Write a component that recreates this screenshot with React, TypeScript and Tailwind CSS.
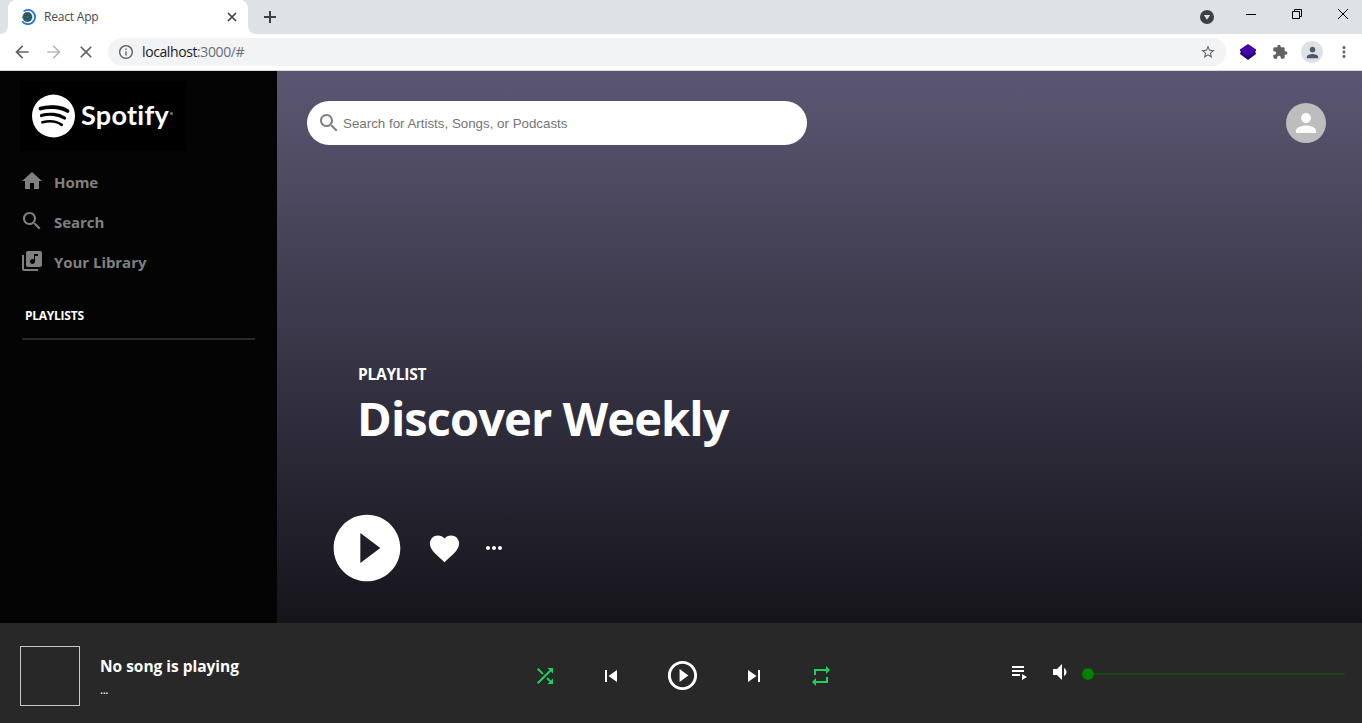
import React from 'react';

const SEGOE = "font-['Open_Sans','Noto_Sans',sans-serif]";

const PATHS = {
  home: 'M10 20v-6h4v6h5v-8h3L12 3 2 12h3v8z',
  search:
    'M15.5 14h-.79l-.28-.27C15.41 12.59 16 11.11 16 9.5 16 5.91 13.09 3 9.5 3S3 5.91 3 9.5 5.91 16 9.5 16c1.61 0 3.09-.59 4.23-1.57l.27.28v.79l5 4.99L20.49 19l-4.99-5zm-6 0C7.01 14 5 11.99 5 9.5S7.01 5 9.5 5 14 7.01 14 9.5 11.99 14 9.5 14z',
  library:
    'M20 2H8c-1.1 0-2 .9-2 2v12c0 1.1.9 2 2 2h12c1.1 0 2-.9 2-2V4c0-1.1-.9-2-2-2zm-2 5h-3v5.5c0 1.38-1.12 2.5-2.5 2.5S10 13.88 10 12.5s1.12-2.5 2.5-2.5c.57 0 1.08.19 1.5.51V5h4v2zM4 6H2v14c0 1.1.9 2 2 2h14v-2H4V6z',
  playFilled:
    'M12 2C6.48 2 2 6.48 2 12s4.48 10 10 10 10-4.48 10-10S17.52 2 12 2zm-2 14.5v-9l6 4.5-6 4.5z',
  heart:
    'M12 21.35l-1.45-1.32C5.4 15.36 2 12.28 2 8.5 2 5.42 4.42 3 7.5 3c1.74 0 3.41.81 4.5 2.09C13.09 3.81 14.76 3 16.5 3 19.58 3 22 5.42 22 8.5c0 3.78-3.4 6.86-8.55 11.54L12 21.35z',
  more: 'M6 10c-1.1 0-2 .9-2 2s.9 2 2 2 2-.9 2-2-.9-2-2-2zm12 0c-1.1 0-2 .9-2 2s.9 2 2 2 2-.9 2-2-.9-2-2-2zm-6 0c-1.1 0-2 .9-2 2s.9 2 2 2 2-.9 2-2-.9-2-2-2z',
  shuffle:
    'M10.59 9.17L5.41 4 4 5.41l5.17 5.17 1.42-1.41zM14.5 4l2.04 2.04L4 18.59 5.41 20 17.96 7.46 20 9.5V4h-5.5zm.33 9.41l-1.41 1.41 3.13 3.13L14.5 20H20v-5.5l-2.04 2.04-3.13-3.13z',
  previous: 'M6 6h2v12H6zm3.5 6l8.5 6V6z',
  playOutline:
    'M10 16.5l6-4.5-6-4.5v9zM12 2C6.48 2 2 6.48 2 12s4.48 10 10 10 10-4.48 10-10S17.52 2 12 2zm0 18c-4.41 0-8-3.59-8-8s3.59-8 8-8 8 3.59 8 8-3.59 8-8 8z',
  next: 'M6 18l8.5-6L6 6v12zM16 6v12h2V6h-2z',
  repeat: 'M7 7h10v3l4-4-4-4v3H5v6h2V7zm10 10H7v-3l-4 4 4 4v-3h12v-6h-2v4z',
  queue: 'M4 10h12v2H4zm0-4h12v2H4zm0 8h8v2H4zm10 0v6l5-3z',
  volume:
    'M18.5 12c0-1.77-1.02-3.29-2.5-4.03v8.05c1.48-.73 2.5-2.25 2.5-4.02zM5 9v6h4l5 5V4L9 9H5z',
  person:
    'M12 12c2.21 0 4-1.79 4-4s-1.79-4-4-4-4 1.79-4 4 1.79 4 4 4zm0 2c-2.67 0-8 1.34-8 4v2h16v-2c0-2.66-5.33-4-8-4z',
  back: 'M20 11H7.83l5.59-5.59L12 4l-8 8 8 8 1.41-1.41L7.83 13H20v-2z',
  forward: 'M12 4l-1.41 1.41L16.17 11H4v2h12.17l-5.58 5.59L12 20l8-8z',
  close:
    'M19 6.41L17.59 5 12 10.59 6.41 5 5 6.41 10.59 12 5 17.59 6.41 19 12 13.41 17.59 19 19 17.59 13.41 12z',
  info: 'M11 7h2v2h-2zm0 4h2v6h-2zm1-9C6.48 2 2 6.48 2 12s4.48 10 10 10 10-4.48 10-10S17.52 2 12 2zm0 18c-4.41 0-8-3.59-8-8s3.59-8 8-8 8 3.59 8 8-3.59 8-8 8z',
  star: 'M22 9.24l-7.19-.62L12 2 9.19 8.63 2 9.24l5.46 4.73L5.82 21 12 17.27 18.18 21l-1.63-7.03L22 9.24zM12 15.4l-3.76 2.27 1-4.28-3.32-2.88 4.38-.38L12 6.1l1.71 4.04 4.38.38-3.32 2.88 1 4.28L12 15.4z',
  extension:
    'M20.5 11H19V7c0-1.1-.9-2-2-2h-4V3.5C13 2.12 11.88 1 10.5 1S8 2.12 8 3.5V5H4c-1.1 0-1.99.9-1.99 2v3.8H3.5c1.49 0 2.7 1.21 2.7 2.7s-1.21 2.7-2.7 2.7H2V20c0 1.1.9 2 2 2h3.8v-1.5c0-1.49 1.21-2.7 2.7-2.7 1.49 0 2.7 1.21 2.7 2.7V22H17c1.1 0 2-.9 2-2v-4h1.5c1.38 0 2.5-1.12 2.5-2.5S21.88 11 20.5 11z',
  kebab:
    'M12 8c1.1 0 2-.9 2-2s-.9-2-2-2-2 .9-2 2 .9 2 2 2zm0 2c-1.1 0-2 .9-2 2s.9 2 2 2 2-.9 2-2-.9-2-2-2zm0 6c-1.1 0-2 .9-2 2s.9 2 2 2 2-.9 2-2-.9-2-2-2z',
};

function Icon({ name, className }: { name: keyof typeof PATHS; className: string }) {
  return (
    <svg viewBox="0 0 24 24" fill="currentColor" className={`block shrink-0 ${className}`}>
      <path d={PATHS[name]} />
    </svg>
  );
}

function TabStrip() {
  return (
    <div className="flex h-[34px] items-stretch bg-[#dee1e6]">
      <div className="w-2 bg-white">
        <div className="h-full rounded-br-lg bg-[#dee1e6]" />
      </div>
      <div className="flex w-60 items-center rounded-t-lg bg-white pl-3 pr-[11px]">
        <svg viewBox="0 0 16 16" className="block size-4" fill="none">
          <path d="M3.600 2.400A7.100 7.100 0 1 1 2.200 12.200" stroke="#1a73e8" strokeWidth="1.8" />
          <circle cx="7.400" cy="8" r="5" fill="#3d6f7d" />
          <g stroke="#264652" strokeWidth=".7">
            <ellipse cx="7.400" cy="8" rx="4.600" ry="1.800" />
            <ellipse cx="7.400" cy="8" rx="4.600" ry="1.800" transform="rotate(60 7.400 8)" />
            <ellipse cx="7.400" cy="8" rx="4.600" ry="1.800" transform="rotate(120 7.400 8)" />
          </g>
        </svg>
        <span className="ml-2 flex-1 text-[12px] leading-4 tracking-[-0.2px] text-[#45494d]">React App</span>
        <svg viewBox="0 0 10 10" className="block size-[10px]" stroke="#3c4043" strokeWidth="1.7">
          <path d="M1 1l8 8M9 1L1 9" />
        </svg>
      </div>
      <div className="w-2 bg-white">
        <div className="h-full rounded-bl-lg bg-[#dee1e6]" />
      </div>
      <div className="flex flex-1 items-center pl-2">
        <svg viewBox="0 0 12 12" className="block size-3" stroke="#3c4043" strokeWidth="2">
          <path d="M6 0v12M0 6h12" />
        </svg>
      </div>
      <div className="flex items-center pr-[13px]">
        <svg viewBox="0 0 14 14" className="mr-8 block size-[14px]">
          <circle cx="7" cy="7" r="7" fill="#3c4043" />
          <path d="M3.8 5h6.4L7 9.8z" fill="#dee1e6" />
        </svg>
        <div className="mb-[5px] mr-9 h-px w-[10px] bg-black" />
        <svg viewBox="0 0 10 10" className="mb-[6px] mr-[35px] block size-[10px]" fill="none" stroke="#000">
          <path d="M.5 2.5h7v7h-7zM2.5 2.5v-2h7v7h-2" />
        </svg>
        <svg viewBox="0 0 12 12" className="mb-[6px] block size-3" fill="none" stroke="#000">
          <path d="M1 1l10 10M11 1L1 11" />
        </svg>
      </div>
    </div>
  );
}

function Toolbar() {
  return (
    <div className="flex h-[37px] items-center border-b border-[#d5d8dc] bg-white pl-3 pr-2">
      <Icon name="back" className="size-5 text-[#5f6368]" />
      <Icon name="forward" className="ml-3 size-5 text-[#bababc]" />
      <Icon name="close" className="ml-3 size-5 text-[#5f6368]" />
      <div className="ml-3 flex h-7 w-[1118px] items-center rounded-full bg-[#f1f3f4] pl-[10px] pr-[10px]">
        <Icon name="info" className="size-4 scale-105 text-[#5f6368]" />
        <span className="ml-2 flex-1 text-[14px] leading-5 tracking-[-0.4px] text-[#202124]">
          localhost<span className="text-[#6b6f74]">:3000/#</span>
        </span>
        <Icon name="star" className="size-4 text-[#5f6368]" />
      </div>
      <svg viewBox="0 0 16 16" className="ml-[14px] block size-4">
        <path d="M1 7h14l1 3-8 6-8-6z" fill="#22006b" />
        <path d="M8 0l8 5.500v1.500L8 12.500 0 7V5.500z" fill="#4500a8" />
      </svg>
      <Icon name="extension" className="ml-4 size-4 text-[#5f6368]" />
      <div className="ml-[13px] flex size-[22px] items-center justify-center rounded-full bg-[#dee1e6]">
        <Icon name="person" className="size-[17px] text-[#4e5a6b]" />
      </div>
      <Icon name="kebab" className="ml-[12px] size-[18px] text-[#5f6368]" />
    </div>
  );
}

function NavItem({ icon, label }: { icon: keyof typeof PATHS; label: string }) {
  return (
    <div className="flex h-10 items-center text-[#808080]">
      <Icon name={icon} className="mb-[3px] size-6" />
      <span className="ml-[10px] text-[15px] font-bold leading-6 tracking-[-0.05px]">{label}</span>
    </div>
  );
}

function Sidebar() {
  return (
    <aside className="w-[277px] bg-[#040404] pl-5 pr-[22px]">
      <div className="mt-[10px] flex h-[70px] w-[166px] items-center bg-black pl-3">
        <svg viewBox="0 0 44 44" className="block size-11 shrink-0" fill="none" strokeLinecap="round" stroke="#000">
          <circle cx="21.5" cy="22" r="21.5" fill="#fff" stroke="none" />
          <path d="M8.500 14.500C17 12 28.500 12.700 35.500 17" strokeWidth="3.800" />
          <path d="M9.500 21.500C17 19.300 26.500 20 32.500 24" strokeWidth="3.200" />
          <path d="M10.500 28.300C17 26.600 24.500 27.200 29.700 30.800" strokeWidth="2.700" />
        </svg>
        <span className="mb-[2px] ml-[5px] text-[27px] font-bold leading-10 tracking-[0.3px] text-white font-[Lato,sans-serif]">
          Spotify
        </span>
        <span className="mb-[5px] ml-px size-[3px] shrink-0 rounded-full bg-[#777]" />
      </div>
      <nav className="mt-[11px]">
        <NavItem icon="home" label="Home" />
        <NavItem icon="search" label="Search" />
        <NavItem icon="library" label="Your Library" />
      </nav>
      <div className="ml-[5px] mt-[26px] text-[12px] font-bold leading-4 tracking-[-0.25px] text-white">PLAYLISTS</div>
      <div className="ml-[2px] mt-[14px] h-[2px] bg-[#282828]" />
    </aside>
  );
}

function Body() {
  return (
    <main className="h-[723px] flex-1 bg-linear-to-b/srgb from-[#5b5773] to-black px-[30px] pt-[30px]">
      <header className="flex h-11 items-center justify-between pr-[6px]">
        <div className="flex h-11 w-[500px] items-center rounded-full bg-white pl-[10px]">
          <Icon name="search" className="size-6 text-[#808080]" />
          <span className="ml-[2px] mt-[2px] text-[13.333px] leading-4 text-[#757575] font-['Liberation_Sans',Arial,sans-serif]">
            Search for Artists, Songs, or Podcasts
          </span>
        </div>
        <div className="flex size-10 items-center justify-center rounded-full bg-[#bdbdbd]">
          <Icon name="person" className="size-[30px] text-[#fafafa]" />
        </div>
      </header>
      <section className="mt-[219px] pl-[50px] font-bold text-white">
        <div className="pl-px text-[15.5px] leading-5 tracking-[-0.25px]">PLAYLIST</div>
        <h1 className="mt-1 text-[47px] leading-[60px] tracking-[-0.9px]">Discover Weekly</h1>
      </section>
      <div className="mt-[60px] flex items-center pl-5 text-white">
        <Icon name="playFilled" className="size-20" />
        <Icon name="heart" className="ml-5 size-[35px]" />
        <Icon name="more" className="ml-5 size-6" />
      </div>
    </main>
  );
}

function Footer() {
  return (
    <footer className="flex h-[100px] items-center bg-[#282828] pl-5 pr-[17px] pt-[6px] text-white">
      <div className="flex w-[513px] items-center">
        <div className="size-[60px] border border-[#c8c8c8]" />
        <div className="ml-5 mt-px">
          <div className="text-[15.5px] font-bold leading-5 tracking-[-0.02px]">No song is playing</div>
          <div className="mt-[6px] text-[12px] leading-4 tracking-[-0.5px]">...</div>
        </div>
      </div>
      <div className="flex flex-1 items-center">
        <Icon name="shuffle" className="size-6 text-[#1ed15e]" />
        <Icon name="previous" className="ml-[42px] size-6" />
        <Icon name="playOutline" className="mb-px ml-[42px] size-[35px]" />
        <Icon name="next" className="ml-[42px] size-6" />
        <Icon name="repeat" className="ml-[43px] size-6 text-[#1ed15e]" />
      </div>
      <div className="mb-2 flex items-center">
        <Icon name="queue" className="size-6" />
        <Icon name="volume" className="ml-4 size-6" />
        <div className="ml-[10px] mt-[3px] flex h-3 w-[263px] items-center">
          <div className="size-3 shrink-0 rounded-full bg-[#008000]" />
          <div className="h-[2px] flex-1 rounded-r-full bg-[#194919]" />
        </div>
      </div>
    </footer>
  );
}

export default function App() {
  return (
    <div className={`flex h-[723px] w-[1362px] flex-col overflow-hidden ${SEGOE}`}>
      <TabStrip />
      <Toolbar />
      <div className="flex h-[552px] shrink-0 overflow-hidden">
        <Sidebar />
        <Body />
      </div>
      <Footer />
    </div>
  );
}
